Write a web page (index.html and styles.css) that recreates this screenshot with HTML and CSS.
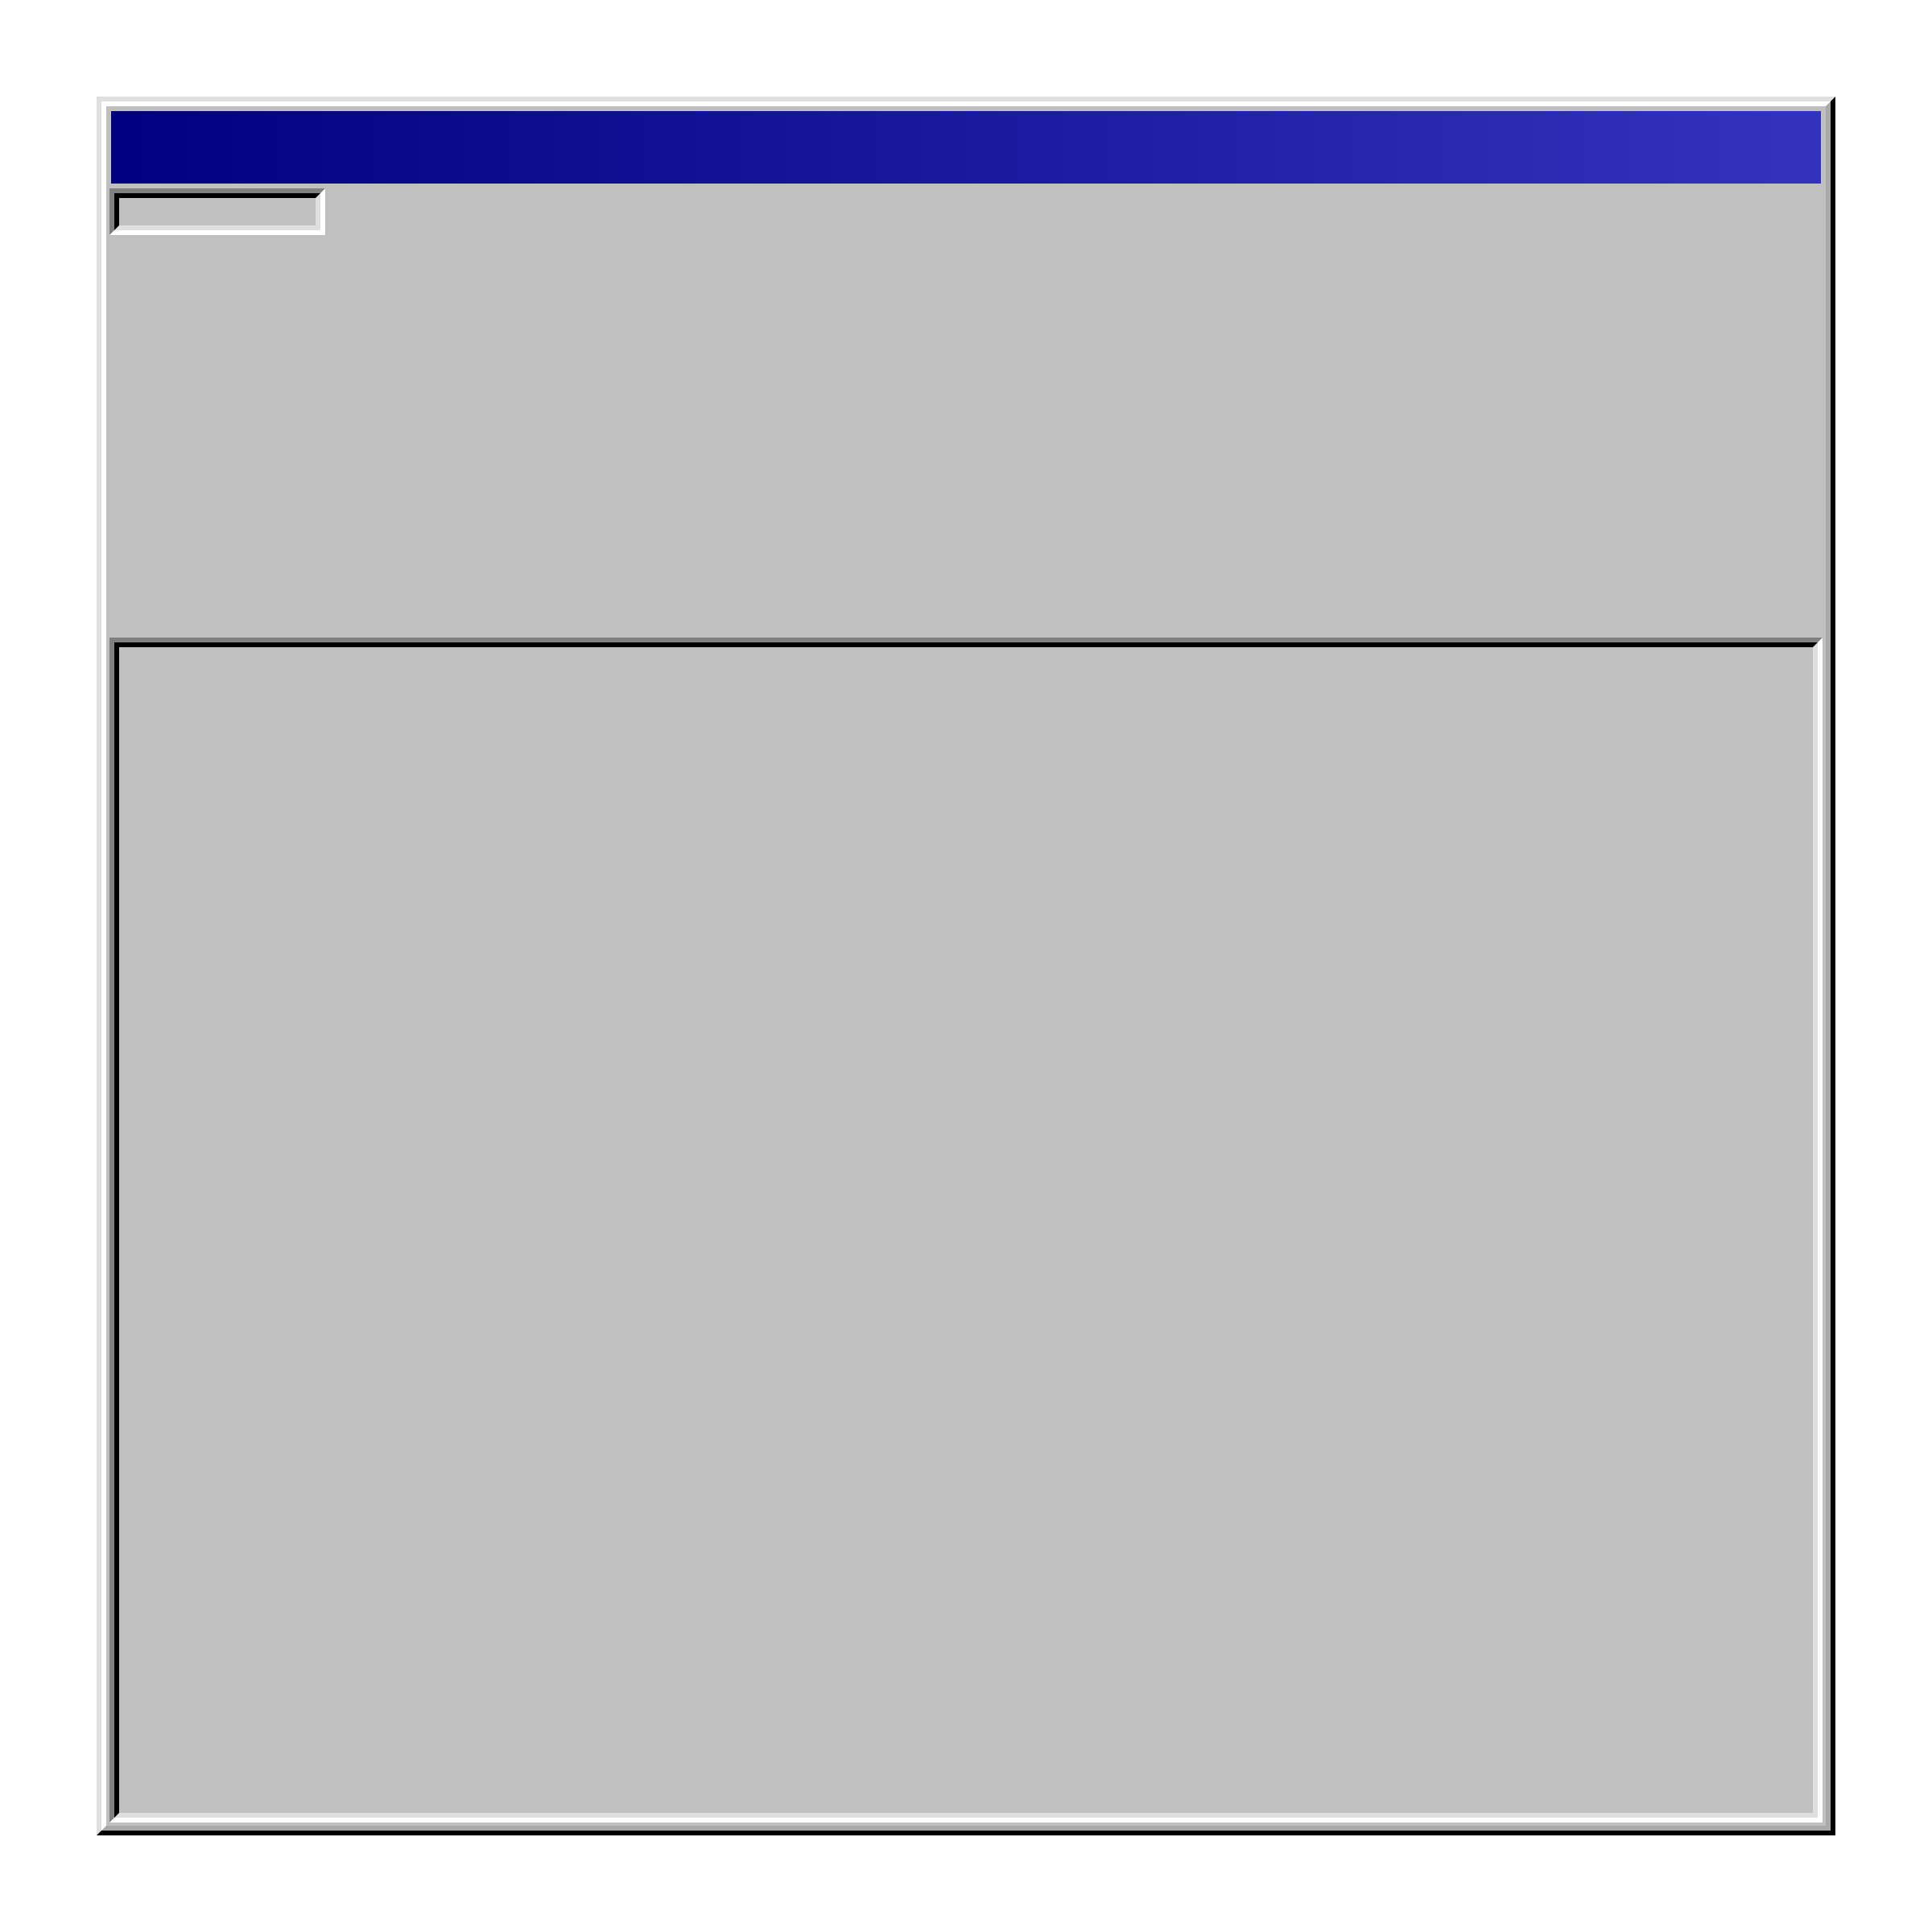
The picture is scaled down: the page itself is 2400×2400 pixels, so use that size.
FILE: index.html
```html
<!DOCTYPE html>
<html>
<head>
<meta charset="utf-8">
<link rel="stylesheet" href="styles.css">
</head>
<body>
<div class="window">
  <div class="window-inner">
    <div class="titlebar"></div>
    <div class="field">
      <div class="field-inner"></div>
    </div>
    <div class="panel">
      <div class="panel-inner"></div>
    </div>
  </div>
</div>
</body>
</html>
```
FILE: styles.css
```css
html, body {
  margin: 0;
  padding: 0;
  background: #ffffff;
}
body {
  padding: 120px;
  font-family: "Liberation Sans", Arial, sans-serif;
}
.window {
  width: 2160px;
  height: 2160px;
  box-sizing: border-box;
  border: 6px solid;
  border-color: #dfdfdf #000000 #000000 #dfdfdf;
  background: #c0c0c0;
}
.window-inner {
  height: 100%;
  box-sizing: border-box;
  border: 6px solid;
  border-color: #ffffff #a9a9a9 #a9a9a9 #ffffff;
  padding: 4px;
  display: flex;
  flex-direction: column;
}
.titlebar {
  height: 90px;
  margin: 2px 2px 0 2px;
  background: linear-gradient(to right, #000080, #3333be);
  flex: none;
}
.field {
  width: 268px;
  height: 58px;
  margin-top: 6px;
  box-sizing: border-box;
  border: 6px solid;
  border-color: #808080 #ffffff #ffffff #808080;
  flex: none;
}
.field-inner {
  height: 100%;
  box-sizing: border-box;
  border: 6px solid;
  border-color: #000000 #dfdfdf #dfdfdf #000000;
  background: #c0c0c0;
}
.panel {
  margin-top: 500px;
  flex: 1;
  box-sizing: border-box;
  border: 6px solid;
  border-color: #808080 #ffffff #ffffff #808080;
}
.panel-inner {
  height: 100%;
  box-sizing: border-box;
  border: 6px solid;
  border-color: #000000 #dfdfdf #dfdfdf #000000;
  background: #c0c0c0;
}
```
